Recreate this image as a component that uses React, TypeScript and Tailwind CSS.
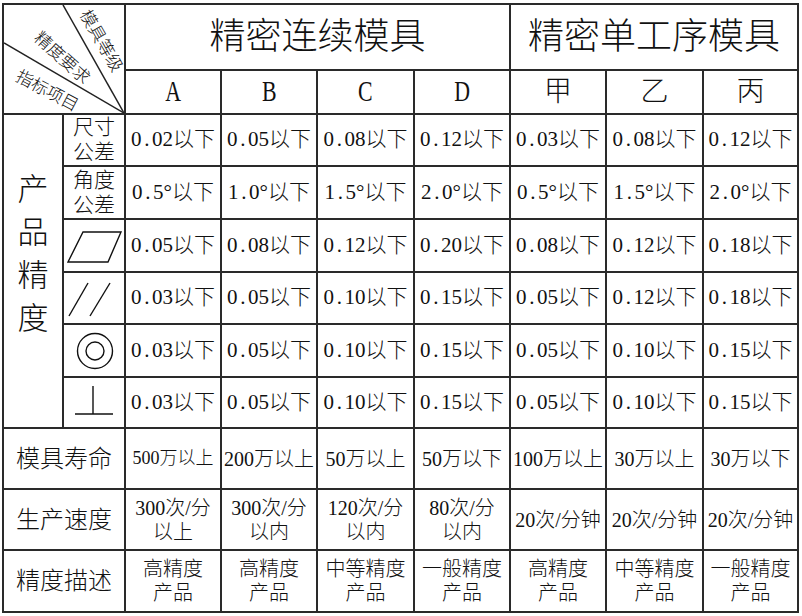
import React from "react";

const font = "font-['Liberation_Serif','Noto_Sans_CJK_SC',serif]";

const grades = ["A", "B", "C", "D", "甲", "乙", "丙"];

const precisionRows: string[][] = [
  ["0.02以下", "0.05以下", "0.08以下", "0.12以下", "0.03以下", "0.08以下", "0.12以下"],
  ["0.5°以下", "1.0°以下", "1.5°以下", "2.0°以下", "0.5°以下", "1.5°以下", "2.0°以下"],
  ["0.05以下", "0.08以下", "0.12以下", "0.20以下", "0.08以下", "0.12以下", "0.18以下"],
  ["0.03以下", "0.05以下", "0.10以下", "0.15以下", "0.05以下", "0.12以下", "0.18以下"],
  ["0.03以下", "0.05以下", "0.10以下", "0.15以下", "0.05以下", "0.10以下", "0.15以下"],
  ["0.03以下", "0.05以下", "0.10以下", "0.15以下", "0.05以下", "0.10以下", "0.15以下"],
];

const life = ["500万以上", "200万以上", "50万以上", "50万以下", "100万以上", "30万以上", "30万以下"];
const speed = [
  ["300次/分", "以上"],
  ["300次/分", "以内"],
  ["120次/分", "以内"],
  ["80次/分", "以内"],
  ["20次/分钟"],
  ["20次/分钟"],
  ["20次/分钟"],
];
const desc = [
  ["高精度", "产品"],
  ["高精度", "产品"],
  ["中等精度", "产品"],
  ["一般精度", "产品"],
  ["高精度", "产品"],
  ["中等精度", "产品"],
  ["一般精度", "产品"],
];

// SimSun-style half-width period takes a full digit cell
function Num({ text }: { text: string }) {
  const parts = text.split(".");
  return (
    <>
      {parts.map((p, i) => (
        <React.Fragment key={i}>
          {i > 0 && <span className="inline-block w-[0.5em] text-center">.</span>}
          {p}
        </React.Fragment>
      ))}
    </>
  );
}

function Symbol({ kind }: { kind: number }) {
  const s = { stroke: "#111", strokeWidth: 1.4, fill: "none" };
  return (
    <svg width="60" height="51" viewBox="0 0 60 51">
      {kind === 2 && <polygon points="19,12 57,12 44,42 4,42" {...s} />}
      {kind === 3 && (
        <>
          <line x1="5" y1="43" x2="24" y2="10" {...s} />
          <line x1="26" y1="43" x2="46" y2="10" {...s} />
        </>
      )}
      {kind === 4 && (
        <>
          <circle cx="31" cy="26" r="17.5" {...s} />
          <circle cx="31" cy="26" r="9" {...s} />
        </>
      )}
      {kind === 5 && (
        <>
          <line x1="29" y1="8" x2="29" y2="36" {...s} />
          <line x1="11" y1="36" x2="49" y2="36" {...s} />
        </>
      )}
    </svg>
  );
}

const cell = "bg-white flex items-center justify-center text-center text-[#111]";

export default function App() {
  return (
    <div className={`w-[802px] h-[616px] bg-white pl-[2px] pt-[3px] ${font}`}>
      <div className="w-[797px] bg-[#2a2a2a] p-[2px]">
        <div className="grid gap-[2px] grid-cols-[58px_60px_94px_94px_95px_94px_94px_95px_93px] grid-rows-[64px_42px_50px_51px_51px_50px_51px_49px_59px_59px_60px]">
          {/* diagonal header */}
          <div className="relative col-span-2 row-span-2 bg-white">
            <svg className="absolute left-0 top-0" width="120" height="108" viewBox="0 0 120 108">
              <line x1="59" y1="0" x2="120" y2="108" stroke="#222" strokeWidth="1.5" />
              <line x1="0" y1="38" x2="120" y2="108" stroke="#222" strokeWidth="1.5" />
            </svg>
            <span className="absolute left-[97px] top-[36px] -translate-x-1/2 -translate-y-1/2 rotate-[60deg] whitespace-nowrap text-[17px] leading-none font-light text-[#111]">
              模具等级
            </span>
            <span className="absolute left-[58px] top-[53px] -translate-x-1/2 -translate-y-1/2 rotate-[42deg] whitespace-nowrap text-[17px] leading-none font-light text-[#111]">
              精度要求
            </span>
            <span className="absolute left-[43px] top-[86px] -translate-x-1/2 -translate-y-1/2 rotate-[28deg] whitespace-nowrap text-[17px] leading-none font-light text-[#111]">
              指标项目
            </span>
          </div>
          <div className={`${cell} col-span-4 text-[36px] font-light`}>精密连续模具</div>
          <div className={`${cell} col-span-3 text-[36px] font-light`}>精密单工序模具</div>
          {grades.map((g, i) => (
            <div key={g} className={`${cell} text-[28px] font-light`}>
              <span className={i < 4 ? "inline-block scale-x-[0.78] scale-y-[1.05]" : ""}>{g}</span>
            </div>
          ))}

          {/* product precision block */}
          <div className="row-span-6 bg-white flex flex-col items-center pt-[53px] text-[31px] leading-[43px] font-light text-[#111]">
            <span>产</span>
            <span>品</span>
            <span>精</span>
            <span>度</span>
          </div>
          {precisionRows.map((row, ri) => (
            <React.Fragment key={ri}>
              {ri === 0 && (
                <div className={`${cell} flex-col text-[21px] leading-[25px] font-light`}>
                  <span>尺寸</span>
                  <span>公差</span>
                </div>
              )}
              {ri === 1 && (
                <div className={`${cell} flex-col text-[21px] leading-[25px] font-light`}>
                  <span>角度</span>
                  <span>公差</span>
                </div>
              )}
              {ri > 1 && (
                <div className="bg-white">
                  <Symbol kind={ri} />
                </div>
              )}
              {row.map((v, ci) => (
                <div key={ci} className={`${cell} text-[21px] font-light whitespace-nowrap`}>
                  <Num text={v} />
                </div>
              ))}
            </React.Fragment>
          ))}

          {/* life */}
          <div className={`${cell} col-span-2 text-[24px] font-light`}>模具寿命</div>
          {life.map((v, i) => (
            <div
              key={i}
              className={`${cell} ${i === 0 ? "text-[18px]" : "text-[20px]"} font-light whitespace-nowrap`}
            >
              {v}
            </div>
          ))}

          {/* speed */}
          <div className={`${cell} col-span-2 text-[24px] font-light`}>生产速度</div>
          {speed.map((v, i) => (
            <div key={i} className={`${cell} flex-col text-[20px] leading-[24px] font-light whitespace-nowrap`}>
              {v.map((t, j) => (
                <span key={j}>{t}</span>
              ))}
            </div>
          ))}

          {/* description */}
          <div className={`${cell} col-span-2 text-[24px] font-light`}>精度描述</div>
          {desc.map((v, i) => (
            <div key={i} className={`${cell} flex-col text-[20px] leading-[24px] font-light whitespace-nowrap`}>
              {v.map((t, j) => (
                <span key={j}>{t}</span>
              ))}
            </div>
          ))}
        </div>
      </div>
    </div>
  );
}
